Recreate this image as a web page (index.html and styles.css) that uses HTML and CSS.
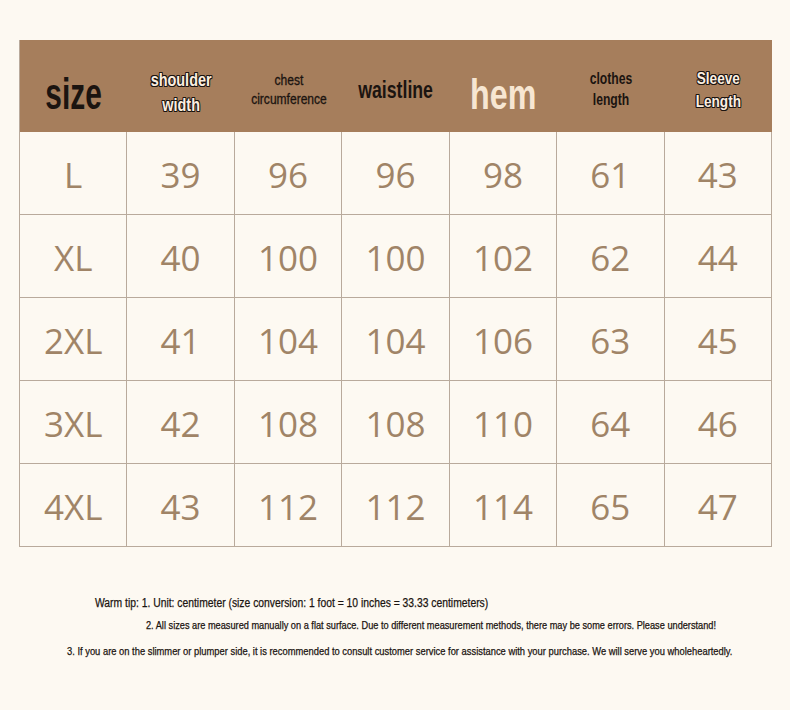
FILE: index.html
```html
<!DOCTYPE html>
<html>
<head>
<meta charset="utf-8">
<link rel="stylesheet" href="styles.css">
</head>
<body>
<div class="page">
  <div class="chart">
    <div class="hcell"><span class="h-size">size</span></div>
    <div class="hcell"><span class="h-outline h-shoulder">shoulder<br>width</span></div>
    <div class="hcell"><span class="h-chest">chest<br>circumference</span></div>
    <div class="hcell"><span class="h-waist">waistline</span></div>
    <div class="hcell"><span class="h-hem">hem</span></div>
    <div class="hcell"><span class="h-clothes">clothes<br>length</span></div>
    <div class="hcell"><span class="h-outline h-sleeve">Sleeve<br>Length</span></div>

    <div class="cell">L</div><div class="cell">39</div><div class="cell">96</div><div class="cell">96</div><div class="cell">98</div><div class="cell">61</div><div class="cell">43</div>
    <div class="cell">XL</div><div class="cell">40</div><div class="cell">100</div><div class="cell">100</div><div class="cell">102</div><div class="cell">62</div><div class="cell">44</div>
    <div class="cell">2XL</div><div class="cell">41</div><div class="cell">104</div><div class="cell">104</div><div class="cell">106</div><div class="cell">63</div><div class="cell">45</div>
    <div class="cell">3XL</div><div class="cell">42</div><div class="cell">108</div><div class="cell">108</div><div class="cell">110</div><div class="cell">64</div><div class="cell">46</div>
    <div class="cell">4XL</div><div class="cell">43</div><div class="cell">112</div><div class="cell">112</div><div class="cell">114</div><div class="cell">65</div><div class="cell">47</div>
  </div>
  <div class="notes">
    <p class="note n1"><span class="ntext">Warm tip: 1. Unit: centimeter (size conversion: 1 foot = 10 inches = 33.33 centimeters)</span></p>
    <p class="note n2"><span class="ntext">2. All sizes are measured manually on a flat surface. Due to different measurement methods, there may be some errors. Please understand!</span></p>
    <p class="note n3"><span class="ntext">3. If you are on the slimmer or plumper side, it is recommended to consult customer service for assistance with your purchase. We will serve you wholeheartedly.</span></p>
  </div>
</div>
</body>
</html>
```

FILE: styles.css
```css
html, body {
  margin: 0;
  padding: 0;
  background: #fdf9f2;
}
.page {
  width: 790px;
  height: 710px;
  padding: 40px 0 0 19px;
  box-sizing: border-box;
  overflow: hidden;
}
.chart {
  width: 753px;
  display: grid;
  grid-template-columns: repeat(7, 1fr);
  grid-template-rows: 92px repeat(5, 83px);
  border-left: 1px solid #b9aa9c;
  box-sizing: border-box;
}
.hcell {
  background: #a67e5c;
  display: flex;
  align-items: center;
  justify-content: center;
  text-align: center;
  font-family: "Liberation Sans", Arial, sans-serif;
  font-weight: bold;
  color: #1b1410;
}
.hcell span {
  display: inline-block;
  white-space: nowrap;
}
.cell {
  display: flex;
  align-items: center;
  justify-content: center;
  border-right: 1px solid #b9aa9c;
  border-bottom: 1px solid #b9aa9c;
  font-family: "Open Sans", "Noto Sans", sans-serif;
  font-size: 35px;
  color: #a08467;
  padding-top: 2px;
  box-sizing: border-box;
}
.h-size {
  font-size: 44px;
  transform: scaleX(0.68);
  padding-top: 16px;
}
.h-outline {
  color: #fbeee0;
  text-shadow: -1px 0 #1b1410, 1px 0 #1b1410, 0 -1px #1b1410, 0 1px #1b1410,
    -1px -1px #1b1410, 1px 1px #1b1410, -1px 1px #1b1410, 1px -1px #1b1410;
}
.h-shoulder {
  font-size: 19px;
  line-height: 25px;
  padding-top: 11px;
  transform: scaleX(0.76);
}
.h-chest {
  font-size: 14px;
  line-height: 19px;
  font-weight: normal;
  padding-top: 8px;
  transform: scaleX(0.86);
  -webkit-text-stroke: 0.3px #1b1410;
}
.h-waist {
  font-size: 23px;
  padding-top: 8px;
  transform: scaleX(0.77);
}
.h-hem {
  font-size: 43px;
  color: #f7e6d2;
  padding-top: 16px;
  transform: scaleX(0.75);
}
.h-clothes {
  font-size: 16px;
  line-height: 21px;
  padding-top: 6px;
  transform: scaleX(0.76);
}
.h-sleeve {
  font-size: 17px;
  line-height: 23px;
  padding-top: 8px;
  transform: scaleX(0.8);
}
.notes {
  margin-top: 47px;
  font-family: "Liberation Sans", Arial, sans-serif;
  color: #1b1410;
}
.note {
  margin: 0;
  white-space: nowrap;
}
.ntext {
  display: inline-block;
  transform-origin: left center;
  -webkit-text-stroke: 0.25px #1b1410;
}
.n1 {
  font-size: 12.5px;
  padding-left: 76px;
  line-height: 18px;
}
.n1 .ntext { transform: scaleX(0.827); }
.n2 {
  font-size: 10.5px;
  padding-left: 127px;
  margin-top: 5px;
  line-height: 16px;
}
.n2 .ntext { transform: scaleX(0.877); }
.n3 {
  font-size: 10.5px;
  padding-left: 48px;
  margin-top: 10px;
  line-height: 16px;
}
.n3 .ntext { transform: scaleX(0.892); }
```
